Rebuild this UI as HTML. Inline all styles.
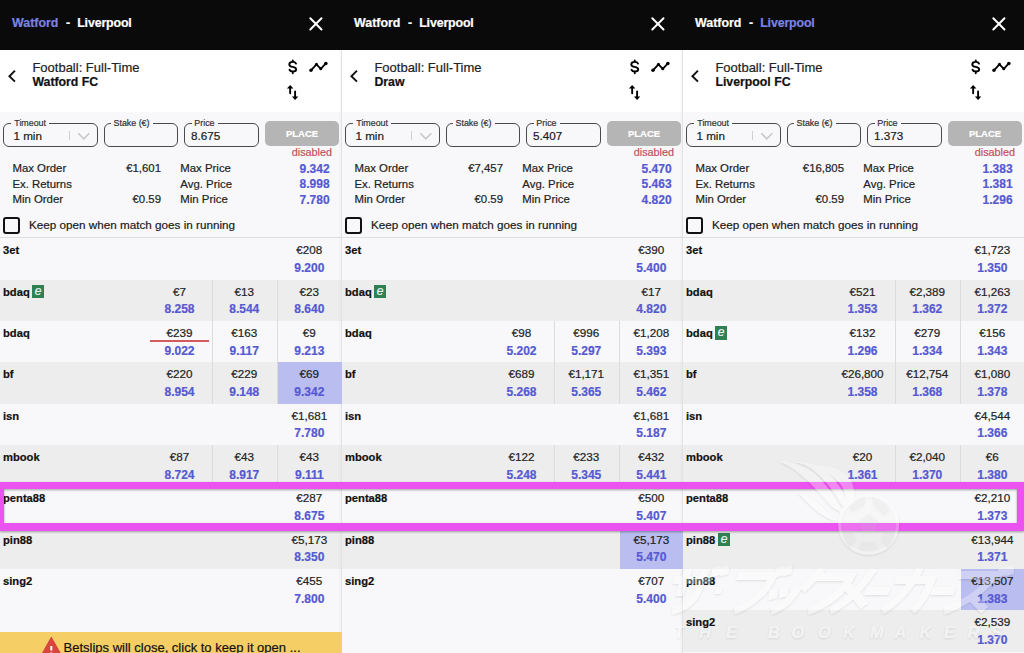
<!DOCTYPE html>
<html><head><meta charset="utf-8"><style>
html,body{margin:0;padding:0;width:1024px;height:653px;overflow:hidden;background:#f8f8fa}
body{position:relative;font-family:"Liberation Sans", sans-serif}
.p{position:absolute;top:0;height:653px;overflow:hidden}
.t{position:absolute;white-space:nowrap;-webkit-text-stroke:0.2px currentColor}
.r{position:absolute}
</style></head><body>
<div class="p" style="left:0px;width:342px"><div class="r" style="left:0.00px;top:0.00px;width:342.00px;height:50.00px;background:#0a0a0a"></div><div class="r" style="left:0.00px;top:50.00px;width:342.00px;height:62.00px;background:#ffffff"></div><div class="r" style="left:0.00px;top:112.00px;width:342.00px;height:541.00px;background:#f8f8fa"></div><div class="t" style="top:17.10px;font-size:12.4px;line-height:12.4px;font-weight:bold;color:#7b83e4;left:12.00px;">Watford</div><div class="t" style="top:17.10px;font-size:12.4px;line-height:12.4px;font-weight:bold;color:#ffffff;left:66.00px;">-</div><div class="t" style="top:17.10px;font-size:12.4px;line-height:12.4px;font-weight:bold;color:#ffffff;letter-spacing:-0.15px;left:77.20px;">Liverpool</div><svg class="r" style="left:305.5px;top:13.7px" width="20" height="20" viewBox="0 0 20 20"><path d="M4.3 4.3L15.5 15.5M15.5 4.3L4.3 15.5" stroke="#fff" stroke-width="2" stroke-linecap="round"/></svg><svg class="r" style="left:6px;top:67.5px" width="12" height="16" viewBox="0 0 12 16"><path d="M8.3 3.4L3.4 8.2L8.3 13" stroke="#111" stroke-width="1.9" fill="none" stroke-linecap="square"/></svg><div class="t" style="top:60.70px;font-size:13px;line-height:13px;font-weight:normal;color:#222;left:32.40px;">Football: Full-Time</div><div class="t" style="top:75.89px;font-size:12.3px;line-height:12.3px;font-weight:bold;color:#111;left:32.40px;">Watford FC</div><svg class="r" style="left:283px;top:55px" width="20" height="25" viewBox="0 0 20 25"><path d="M13 8.6C12.5 7.5 11.3 6.9 9.77 6.9C7.8 6.9 6.3 7.9 6.3 9.4C6.3 11 7.8 11.5 9.77 11.9C11.8 12.3 13.2 13 13.2 14.4C13.2 15.8 11.8 16.5 9.77 16.5C8.2 16.5 7 15.8 6.5 14.75M9.77 5.4V6.9M9.77 16.5V18.3" stroke="#000" stroke-width="1.9" fill="none" stroke-linecap="round"/></svg><svg class="r" style="left:305px;top:57px" width="26" height="20" viewBox="0 0 26 20"><path d="M5.97 13.32L11.49 7.35L15.77 11.79L20.83 6.43" stroke="#000" stroke-width="1.8" fill="none" stroke-linejoin="round"/><circle cx="5.97" cy="13.32" r="1.7"/><circle cx="11.49" cy="7.35" r="1.5"/><circle cx="15.77" cy="11.79" r="1.5"/><circle cx="20.83" cy="6.43" r="1.8"/></svg><svg class="r" style="left:282px;top:80px" width="20" height="24" viewBox="0 0 20 24"><path d="M8.16 7.6V13.3M13.1 11.5V17" stroke="#000" stroke-width="1.9" fill="none" stroke-linecap="round"/><path d="M8.16 4.9L4.9 8.6H11.4Z M13.1 20L9.9 16.4H16.3Z" fill="#000"/></svg><div class="r" style="left:3.40px;top:123.00px;width:94.20px;height:23.50px;border:1px solid #4a4a4a;border-radius:6px;box-sizing:border-box"></div><div class="r" style="left:10.70px;top:120.00px;width:38.60px;height:6.00px;background:#f8f8fa"></div><div class="t" style="top:118.97px;font-size:8.9px;line-height:8.9px;font-weight:normal;color:#333;left:14.30px;">Timeout</div><div class="t" style="top:129.60px;font-size:11.7px;line-height:11.7px;font-weight:normal;color:#1a1a1a;left:13.40px;">1 min</div><div class="r" style="left:69.00px;top:131.00px;width:1.00px;height:8.60px;background:#d0d0d0"></div><svg class="r" style="left:77px;top:132px" width="14" height="9" viewBox="0 0 14 9"><path d="M1.3 1.3L6.8 6.8L12.3 1.3" stroke="#c8c8c8" stroke-width="1.6" fill="none"/></svg><div class="r" style="left:103.60px;top:123.00px;width:74.90px;height:23.50px;border:1px solid #4a4a4a;border-radius:6px;box-sizing:border-box"></div><div class="r" style="left:110.50px;top:120.00px;width:42.00px;height:6.00px;background:#f8f8fa"></div><div class="t" style="top:118.97px;font-size:8.9px;line-height:8.9px;font-weight:normal;color:#333;left:113.50px;">Stake (€)</div><div class="r" style="left:184.20px;top:123.00px;width:74.80px;height:23.50px;border:1px solid #4a4a4a;border-radius:6px;box-sizing:border-box"></div><div class="r" style="left:192.00px;top:120.00px;width:26.00px;height:6.00px;background:#f8f8fa"></div><div class="t" style="top:118.97px;font-size:8.9px;line-height:8.9px;font-weight:normal;color:#333;left:194.30px;">Price</div><div class="t" style="top:129.60px;font-size:11.7px;line-height:11.7px;font-weight:normal;color:#1a1a1a;left:191.00px;">8.675</div><div class="r" style="left:265.00px;top:121.20px;width:74.00px;height:24.60px;background:#b5b5b5;border-radius:5px"></div><div class="t" style="top:128.96px;font-size:9.5px;line-height:9.5px;font-weight:bold;color:#ffffff;left:102.00px;width:400px;text-align:center;">PLACE</div><div class="t" style="top:147.16px;font-size:10.8px;line-height:10.8px;font-weight:normal;color:#c34f5c;left:-68.00px;width:400px;text-align:right;">disabled</div><div class="t" style="top:162.95px;font-size:11.4px;line-height:11.4px;font-weight:normal;color:#222;left:12.40px;">Max Order</div><div class="t" style="top:162.95px;font-size:11.4px;line-height:11.4px;font-weight:normal;color:#222;left:-239.00px;width:400px;text-align:right;">€1,601</div><div class="t" style="top:178.60px;font-size:11.4px;line-height:11.4px;font-weight:normal;color:#222;left:12.40px;">Ex. Returns</div><div class="t" style="top:194.25px;font-size:11.4px;line-height:11.4px;font-weight:normal;color:#222;left:12.40px;">Min Order</div><div class="t" style="top:194.25px;font-size:11.4px;line-height:11.4px;font-weight:normal;color:#222;left:-239.00px;width:400px;text-align:right;">€0.59</div><div class="t" style="top:162.95px;font-size:11.4px;line-height:11.4px;font-weight:normal;color:#222;left:180.30px;">Max Price</div><div class="t" style="top:162.74px;font-size:12px;line-height:12px;font-weight:bold;color:#5659d2;left:-70.40px;width:400px;text-align:right;">9.342</div><div class="t" style="top:178.60px;font-size:11.4px;line-height:11.4px;font-weight:normal;color:#222;left:180.30px;">Avg. Price</div><div class="t" style="top:178.39px;font-size:12px;line-height:12px;font-weight:bold;color:#5659d2;left:-70.40px;width:400px;text-align:right;">8.998</div><div class="t" style="top:194.25px;font-size:11.4px;line-height:11.4px;font-weight:normal;color:#222;left:180.30px;">Min Price</div><div class="t" style="top:194.04px;font-size:12px;line-height:12px;font-weight:bold;color:#5659d2;left:-70.40px;width:400px;text-align:right;">7.780</div><div class="r" style="left:2.90px;top:216.70px;width:17.30px;height:17.00px;border:2px solid #111;border-radius:3px;box-sizing:border-box"></div><div class="t" style="top:219.40px;font-size:11.7px;line-height:11.7px;font-weight:normal;color:#1a1a1a;left:29.00px;">Keep open when match goes in running</div><div class="r" style="left:0.00px;top:237.00px;width:342.00px;height:1.30px;background:#dedede"></div><div class="r" style="left:0.00px;top:238.50px;width:342.00px;height:41.33px;background:#f8f8fa"></div><div class="t" style="top:245.22px;font-size:11.2px;line-height:11.2px;font-weight:bold;color:#111;left:3.00px;">3et</div><div class="t" style="top:244.20px;font-size:11.7px;line-height:11.7px;font-weight:normal;color:#222;left:109.38px;width:400px;text-align:center;">€208</div><div class="t" style="top:262.14px;font-size:12px;line-height:12px;font-weight:bold;color:#5659d2;left:109.38px;width:400px;text-align:center;">9.200</div><div class="r" style="left:0.00px;top:279.83px;width:342.00px;height:41.33px;background:#ededed"></div><div class="r" style="left:212.00px;top:279.83px;width:1.00px;height:41.33px;background:#dcdcdc"></div><div class="r" style="left:277.00px;top:279.83px;width:1.00px;height:41.33px;background:#dcdcdc"></div><div class="t" style="top:286.55px;font-size:11.2px;line-height:11.2px;font-weight:bold;color:#111;left:3.00px;">bdaq</div><div class="r" style="left:32.20px;top:284.83px;width:12.00px;height:13.50px;background:#2f8053"></div><div class="t" style="top:285.07px;font-size:12px;line-height:12px;font-weight:normal;color:#eaf3ec;left:-161.80px;width:400px;text-align:center;font-style:italic;font-family:"Liberation Serif",serif;">e</div><div class="t" style="top:285.53px;font-size:11.7px;line-height:11.7px;font-weight:normal;color:#222;left:-20.50px;width:400px;text-align:center;">€7</div><div class="t" style="top:303.47px;font-size:12px;line-height:12px;font-weight:bold;color:#5659d2;left:-20.50px;width:400px;text-align:center;">8.258</div><div class="t" style="top:285.53px;font-size:11.7px;line-height:11.7px;font-weight:normal;color:#222;left:44.25px;width:400px;text-align:center;">€13</div><div class="t" style="top:303.47px;font-size:12px;line-height:12px;font-weight:bold;color:#5659d2;left:44.25px;width:400px;text-align:center;">8.544</div><div class="t" style="top:285.53px;font-size:11.7px;line-height:11.7px;font-weight:normal;color:#222;left:109.38px;width:400px;text-align:center;">€23</div><div class="t" style="top:303.47px;font-size:12px;line-height:12px;font-weight:bold;color:#5659d2;left:109.38px;width:400px;text-align:center;">8.640</div><div class="r" style="left:0.00px;top:321.16px;width:342.00px;height:41.33px;background:#f8f8fa"></div><div class="r" style="left:212.00px;top:321.16px;width:1.00px;height:41.33px;background:#dcdcdc"></div><div class="r" style="left:277.00px;top:321.16px;width:1.00px;height:41.33px;background:#dcdcdc"></div><div class="t" style="top:327.88px;font-size:11.2px;line-height:11.2px;font-weight:bold;color:#111;left:3.00px;">bdaq</div><div class="t" style="top:326.86px;font-size:11.7px;line-height:11.7px;font-weight:normal;color:#222;left:-20.50px;width:400px;text-align:center;">€239</div><div class="t" style="top:344.80px;font-size:12px;line-height:12px;font-weight:bold;color:#5659d2;left:-20.50px;width:400px;text-align:center;">9.022</div><div class="t" style="top:326.86px;font-size:11.7px;line-height:11.7px;font-weight:normal;color:#222;left:44.25px;width:400px;text-align:center;">€163</div><div class="t" style="top:344.80px;font-size:12px;line-height:12px;font-weight:bold;color:#5659d2;left:44.25px;width:400px;text-align:center;">9.117</div><div class="t" style="top:326.86px;font-size:11.7px;line-height:11.7px;font-weight:normal;color:#222;left:109.38px;width:400px;text-align:center;">€9</div><div class="t" style="top:344.80px;font-size:12px;line-height:12px;font-weight:bold;color:#5659d2;left:109.38px;width:400px;text-align:center;">9.213</div><div class="r" style="left:149.60px;top:340.46px;width:59.40px;height:2.00px;background:#d45a5d"></div><div class="r" style="left:0.00px;top:362.49px;width:342.00px;height:41.33px;background:#ededed"></div><div class="r" style="left:212.00px;top:362.49px;width:1.00px;height:41.33px;background:#dcdcdc"></div><div class="r" style="left:277.00px;top:362.49px;width:1.00px;height:41.33px;background:#dcdcdc"></div><div class="t" style="top:369.21px;font-size:11.2px;line-height:11.2px;font-weight:bold;color:#111;left:3.00px;">bf</div><div class="t" style="top:368.19px;font-size:11.7px;line-height:11.7px;font-weight:normal;color:#222;left:-20.50px;width:400px;text-align:center;">€220</div><div class="t" style="top:386.13px;font-size:12px;line-height:12px;font-weight:bold;color:#5659d2;left:-20.50px;width:400px;text-align:center;">8.954</div><div class="t" style="top:368.19px;font-size:11.7px;line-height:11.7px;font-weight:normal;color:#222;left:44.25px;width:400px;text-align:center;">€229</div><div class="t" style="top:386.13px;font-size:12px;line-height:12px;font-weight:bold;color:#5659d2;left:44.25px;width:400px;text-align:center;">9.148</div><div class="r" style="left:0.00px;top:403.82px;width:342.00px;height:41.33px;background:#f8f8fa"></div><div class="t" style="top:410.54px;font-size:11.2px;line-height:11.2px;font-weight:bold;color:#111;left:3.00px;">isn</div><div class="t" style="top:409.52px;font-size:11.7px;line-height:11.7px;font-weight:normal;color:#222;left:109.38px;width:400px;text-align:center;">€1,681</div><div class="t" style="top:427.46px;font-size:12px;line-height:12px;font-weight:bold;color:#5659d2;left:109.38px;width:400px;text-align:center;">7.780</div><div class="r" style="left:0.00px;top:445.15px;width:342.00px;height:41.33px;background:#ededed"></div><div class="r" style="left:212.00px;top:445.15px;width:1.00px;height:41.33px;background:#dcdcdc"></div><div class="r" style="left:277.00px;top:445.15px;width:1.00px;height:41.33px;background:#dcdcdc"></div><div class="t" style="top:451.87px;font-size:11.2px;line-height:11.2px;font-weight:bold;color:#111;left:3.00px;">mbook</div><div class="t" style="top:450.85px;font-size:11.7px;line-height:11.7px;font-weight:normal;color:#222;left:-20.50px;width:400px;text-align:center;">€87</div><div class="t" style="top:468.79px;font-size:12px;line-height:12px;font-weight:bold;color:#5659d2;left:-20.50px;width:400px;text-align:center;">8.724</div><div class="t" style="top:450.85px;font-size:11.7px;line-height:11.7px;font-weight:normal;color:#222;left:44.25px;width:400px;text-align:center;">€43</div><div class="t" style="top:468.79px;font-size:12px;line-height:12px;font-weight:bold;color:#5659d2;left:44.25px;width:400px;text-align:center;">8.917</div><div class="t" style="top:450.85px;font-size:11.7px;line-height:11.7px;font-weight:normal;color:#222;left:109.38px;width:400px;text-align:center;">€43</div><div class="t" style="top:468.79px;font-size:12px;line-height:12px;font-weight:bold;color:#5659d2;left:109.38px;width:400px;text-align:center;">9.111</div><div class="r" style="left:0.00px;top:486.48px;width:342.00px;height:41.33px;background:#f8f8fa"></div><div class="t" style="top:493.20px;font-size:11.2px;line-height:11.2px;font-weight:bold;color:#111;left:3.00px;">penta88</div><div class="t" style="top:492.18px;font-size:11.7px;line-height:11.7px;font-weight:normal;color:#222;left:109.38px;width:400px;text-align:center;">€287</div><div class="t" style="top:510.12px;font-size:12px;line-height:12px;font-weight:bold;color:#5659d2;left:109.38px;width:400px;text-align:center;">8.675</div><div class="r" style="left:0.00px;top:527.81px;width:342.00px;height:41.33px;background:#ededed"></div><div class="t" style="top:534.53px;font-size:11.2px;line-height:11.2px;font-weight:bold;color:#111;left:3.00px;">pin88</div><div class="t" style="top:533.51px;font-size:11.7px;line-height:11.7px;font-weight:normal;color:#222;left:109.38px;width:400px;text-align:center;">€5,173</div><div class="t" style="top:551.45px;font-size:12px;line-height:12px;font-weight:bold;color:#5659d2;left:109.38px;width:400px;text-align:center;">8.350</div><div class="r" style="left:0.00px;top:569.14px;width:342.00px;height:41.33px;background:#f8f8fa"></div><div class="t" style="top:575.86px;font-size:11.2px;line-height:11.2px;font-weight:bold;color:#111;left:3.00px;">sing2</div><div class="t" style="top:574.84px;font-size:11.7px;line-height:11.7px;font-weight:normal;color:#222;left:109.38px;width:400px;text-align:center;">€455</div><div class="t" style="top:592.78px;font-size:12px;line-height:12px;font-weight:bold;color:#5659d2;left:109.38px;width:400px;text-align:center;">7.800</div><div class="r" style="left:338.00px;top:50.00px;width:3.00px;height:603.00px;background:linear-gradient(to right, rgba(0,0,0,0), rgba(0,0,0,0.025))"></div><div class="r" style="left:341.00px;top:50.00px;width:1.00px;height:603.00px;background:#e2e2e2"></div><div class="r" style="left:277.50px;top:362.49px;width:64.50px;height:41.33px;background:#b9bdf0"></div><div class="t" style="top:368.19px;font-size:11.7px;line-height:11.7px;font-weight:normal;color:#222;left:109.38px;width:400px;text-align:center;">€69</div><div class="t" style="top:386.13px;font-size:12px;line-height:12px;font-weight:bold;color:#5659d2;left:109.38px;width:400px;text-align:center;">9.342</div><div class="r" style="left:0.00px;top:632.00px;width:342.00px;height:21.00px;background:#f5cf66"></div><svg class="r" style="left:40px;top:636px" width="24" height="20" viewBox="0 0 24 20"><path d="M11.3 1.6L21.5 19.5H1.3Z" fill="#d9453f" stroke="#d9453f" stroke-width="1.2" stroke-linejoin="round"/><rect x="10.3" y="10" width="2" height="4.5" fill="#fff"/><rect x="10.3" y="16.5" width="2" height="2" fill="#fff"/></svg><div class="t" style="top:640.50px;font-size:13px;line-height:13px;font-weight:normal;color:#111;left:63.50px;">Betslips will close, click to keep it open ...</div></div><div class="p" style="left:342px;width:341px"><div class="r" style="left:0.00px;top:0.00px;width:341.00px;height:50.00px;background:#0a0a0a"></div><div class="r" style="left:0.00px;top:50.00px;width:341.00px;height:62.00px;background:#ffffff"></div><div class="r" style="left:0.00px;top:112.00px;width:341.00px;height:541.00px;background:#f8f8fa"></div><div class="t" style="top:17.10px;font-size:12.4px;line-height:12.4px;font-weight:bold;color:#ffffff;left:12.00px;">Watford</div><div class="t" style="top:17.10px;font-size:12.4px;line-height:12.4px;font-weight:bold;color:#ffffff;left:66.00px;">-</div><div class="t" style="top:17.10px;font-size:12.4px;line-height:12.4px;font-weight:bold;color:#ffffff;letter-spacing:-0.15px;left:77.20px;">Liverpool</div><svg class="r" style="left:305.5px;top:13.7px" width="20" height="20" viewBox="0 0 20 20"><path d="M4.3 4.3L15.5 15.5M15.5 4.3L4.3 15.5" stroke="#fff" stroke-width="2" stroke-linecap="round"/></svg><svg class="r" style="left:6px;top:67.5px" width="12" height="16" viewBox="0 0 12 16"><path d="M8.3 3.4L3.4 8.2L8.3 13" stroke="#111" stroke-width="1.9" fill="none" stroke-linecap="square"/></svg><div class="t" style="top:60.70px;font-size:13px;line-height:13px;font-weight:normal;color:#222;left:32.40px;">Football: Full-Time</div><div class="t" style="top:75.89px;font-size:12.3px;line-height:12.3px;font-weight:bold;color:#111;left:32.40px;">Draw</div><svg class="r" style="left:283px;top:55px" width="20" height="25" viewBox="0 0 20 25"><path d="M13 8.6C12.5 7.5 11.3 6.9 9.77 6.9C7.8 6.9 6.3 7.9 6.3 9.4C6.3 11 7.8 11.5 9.77 11.9C11.8 12.3 13.2 13 13.2 14.4C13.2 15.8 11.8 16.5 9.77 16.5C8.2 16.5 7 15.8 6.5 14.75M9.77 5.4V6.9M9.77 16.5V18.3" stroke="#000" stroke-width="1.9" fill="none" stroke-linecap="round"/></svg><svg class="r" style="left:305px;top:57px" width="26" height="20" viewBox="0 0 26 20"><path d="M5.97 13.32L11.49 7.35L15.77 11.79L20.83 6.43" stroke="#000" stroke-width="1.8" fill="none" stroke-linejoin="round"/><circle cx="5.97" cy="13.32" r="1.7"/><circle cx="11.49" cy="7.35" r="1.5"/><circle cx="15.77" cy="11.79" r="1.5"/><circle cx="20.83" cy="6.43" r="1.8"/></svg><svg class="r" style="left:282px;top:80px" width="20" height="24" viewBox="0 0 20 24"><path d="M8.16 7.6V13.3M13.1 11.5V17" stroke="#000" stroke-width="1.9" fill="none" stroke-linecap="round"/><path d="M8.16 4.9L4.9 8.6H11.4Z M13.1 20L9.9 16.4H16.3Z" fill="#000"/></svg><div class="r" style="left:3.40px;top:123.00px;width:94.20px;height:23.50px;border:1px solid #4a4a4a;border-radius:6px;box-sizing:border-box"></div><div class="r" style="left:10.70px;top:120.00px;width:38.60px;height:6.00px;background:#f8f8fa"></div><div class="t" style="top:118.97px;font-size:8.9px;line-height:8.9px;font-weight:normal;color:#333;left:14.30px;">Timeout</div><div class="t" style="top:129.60px;font-size:11.7px;line-height:11.7px;font-weight:normal;color:#1a1a1a;left:13.40px;">1 min</div><div class="r" style="left:69.00px;top:131.00px;width:1.00px;height:8.60px;background:#d0d0d0"></div><svg class="r" style="left:77px;top:132px" width="14" height="9" viewBox="0 0 14 9"><path d="M1.3 1.3L6.8 6.8L12.3 1.3" stroke="#c8c8c8" stroke-width="1.6" fill="none"/></svg><div class="r" style="left:103.60px;top:123.00px;width:74.90px;height:23.50px;border:1px solid #4a4a4a;border-radius:6px;box-sizing:border-box"></div><div class="r" style="left:110.50px;top:120.00px;width:42.00px;height:6.00px;background:#f8f8fa"></div><div class="t" style="top:118.97px;font-size:8.9px;line-height:8.9px;font-weight:normal;color:#333;left:113.50px;">Stake (€)</div><div class="r" style="left:184.20px;top:123.00px;width:74.80px;height:23.50px;border:1px solid #4a4a4a;border-radius:6px;box-sizing:border-box"></div><div class="r" style="left:192.00px;top:120.00px;width:26.00px;height:6.00px;background:#f8f8fa"></div><div class="t" style="top:118.97px;font-size:8.9px;line-height:8.9px;font-weight:normal;color:#333;left:194.30px;">Price</div><div class="t" style="top:129.60px;font-size:11.7px;line-height:11.7px;font-weight:normal;color:#1a1a1a;left:191.00px;">5.407</div><div class="r" style="left:265.00px;top:121.20px;width:74.00px;height:24.60px;background:#b5b5b5;border-radius:5px"></div><div class="t" style="top:128.96px;font-size:9.5px;line-height:9.5px;font-weight:bold;color:#ffffff;left:102.00px;width:400px;text-align:center;">PLACE</div><div class="t" style="top:147.16px;font-size:10.8px;line-height:10.8px;font-weight:normal;color:#c34f5c;left:-68.00px;width:400px;text-align:right;">disabled</div><div class="t" style="top:162.95px;font-size:11.4px;line-height:11.4px;font-weight:normal;color:#222;left:12.40px;">Max Order</div><div class="t" style="top:162.95px;font-size:11.4px;line-height:11.4px;font-weight:normal;color:#222;left:-239.00px;width:400px;text-align:right;">€7,457</div><div class="t" style="top:178.60px;font-size:11.4px;line-height:11.4px;font-weight:normal;color:#222;left:12.40px;">Ex. Returns</div><div class="t" style="top:194.25px;font-size:11.4px;line-height:11.4px;font-weight:normal;color:#222;left:12.40px;">Min Order</div><div class="t" style="top:194.25px;font-size:11.4px;line-height:11.4px;font-weight:normal;color:#222;left:-239.00px;width:400px;text-align:right;">€0.59</div><div class="t" style="top:162.95px;font-size:11.4px;line-height:11.4px;font-weight:normal;color:#222;left:180.30px;">Max Price</div><div class="t" style="top:162.74px;font-size:12px;line-height:12px;font-weight:bold;color:#5659d2;left:-70.40px;width:400px;text-align:right;">5.470</div><div class="t" style="top:178.60px;font-size:11.4px;line-height:11.4px;font-weight:normal;color:#222;left:180.30px;">Avg. Price</div><div class="t" style="top:178.39px;font-size:12px;line-height:12px;font-weight:bold;color:#5659d2;left:-70.40px;width:400px;text-align:right;">5.463</div><div class="t" style="top:194.25px;font-size:11.4px;line-height:11.4px;font-weight:normal;color:#222;left:180.30px;">Min Price</div><div class="t" style="top:194.04px;font-size:12px;line-height:12px;font-weight:bold;color:#5659d2;left:-70.40px;width:400px;text-align:right;">4.820</div><div class="r" style="left:2.90px;top:216.70px;width:17.30px;height:17.00px;border:2px solid #111;border-radius:3px;box-sizing:border-box"></div><div class="t" style="top:219.40px;font-size:11.7px;line-height:11.7px;font-weight:normal;color:#1a1a1a;left:29.00px;">Keep open when match goes in running</div><div class="r" style="left:0.00px;top:237.00px;width:341.00px;height:1.30px;background:#dedede"></div><div class="r" style="left:0.00px;top:238.50px;width:341.00px;height:41.33px;background:#f8f8fa"></div><div class="t" style="top:245.22px;font-size:11.2px;line-height:11.2px;font-weight:bold;color:#111;left:3.00px;">3et</div><div class="t" style="top:244.20px;font-size:11.7px;line-height:11.7px;font-weight:normal;color:#222;left:109.38px;width:400px;text-align:center;">€390</div><div class="t" style="top:262.14px;font-size:12px;line-height:12px;font-weight:bold;color:#5659d2;left:109.38px;width:400px;text-align:center;">5.400</div><div class="r" style="left:0.00px;top:279.83px;width:341.00px;height:41.33px;background:#ededed"></div><div class="t" style="top:286.55px;font-size:11.2px;line-height:11.2px;font-weight:bold;color:#111;left:3.00px;">bdaq</div><div class="r" style="left:32.20px;top:284.83px;width:12.00px;height:13.50px;background:#2f8053"></div><div class="t" style="top:285.07px;font-size:12px;line-height:12px;font-weight:normal;color:#eaf3ec;left:-161.80px;width:400px;text-align:center;font-style:italic;font-family:"Liberation Serif",serif;">e</div><div class="t" style="top:285.53px;font-size:11.7px;line-height:11.7px;font-weight:normal;color:#222;left:109.38px;width:400px;text-align:center;">€17</div><div class="t" style="top:303.47px;font-size:12px;line-height:12px;font-weight:bold;color:#5659d2;left:109.38px;width:400px;text-align:center;">4.820</div><div class="r" style="left:0.00px;top:321.16px;width:341.00px;height:41.33px;background:#f8f8fa"></div><div class="r" style="left:212.00px;top:321.16px;width:1.00px;height:41.33px;background:#dcdcdc"></div><div class="r" style="left:277.00px;top:321.16px;width:1.00px;height:41.33px;background:#dcdcdc"></div><div class="t" style="top:327.88px;font-size:11.2px;line-height:11.2px;font-weight:bold;color:#111;left:3.00px;">bdaq</div><div class="t" style="top:326.86px;font-size:11.7px;line-height:11.7px;font-weight:normal;color:#222;left:-20.50px;width:400px;text-align:center;">€98</div><div class="t" style="top:344.80px;font-size:12px;line-height:12px;font-weight:bold;color:#5659d2;left:-20.50px;width:400px;text-align:center;">5.202</div><div class="t" style="top:326.86px;font-size:11.7px;line-height:11.7px;font-weight:normal;color:#222;left:44.25px;width:400px;text-align:center;">€996</div><div class="t" style="top:344.80px;font-size:12px;line-height:12px;font-weight:bold;color:#5659d2;left:44.25px;width:400px;text-align:center;">5.297</div><div class="t" style="top:326.86px;font-size:11.7px;line-height:11.7px;font-weight:normal;color:#222;left:109.38px;width:400px;text-align:center;">€1,208</div><div class="t" style="top:344.80px;font-size:12px;line-height:12px;font-weight:bold;color:#5659d2;left:109.38px;width:400px;text-align:center;">5.393</div><div class="r" style="left:0.00px;top:362.49px;width:341.00px;height:41.33px;background:#ededed"></div><div class="r" style="left:212.00px;top:362.49px;width:1.00px;height:41.33px;background:#dcdcdc"></div><div class="r" style="left:277.00px;top:362.49px;width:1.00px;height:41.33px;background:#dcdcdc"></div><div class="t" style="top:369.21px;font-size:11.2px;line-height:11.2px;font-weight:bold;color:#111;left:3.00px;">bf</div><div class="t" style="top:368.19px;font-size:11.7px;line-height:11.7px;font-weight:normal;color:#222;left:-20.50px;width:400px;text-align:center;">€689</div><div class="t" style="top:386.13px;font-size:12px;line-height:12px;font-weight:bold;color:#5659d2;left:-20.50px;width:400px;text-align:center;">5.268</div><div class="t" style="top:368.19px;font-size:11.7px;line-height:11.7px;font-weight:normal;color:#222;left:44.25px;width:400px;text-align:center;">€1,171</div><div class="t" style="top:386.13px;font-size:12px;line-height:12px;font-weight:bold;color:#5659d2;left:44.25px;width:400px;text-align:center;">5.365</div><div class="t" style="top:368.19px;font-size:11.7px;line-height:11.7px;font-weight:normal;color:#222;left:109.38px;width:400px;text-align:center;">€1,351</div><div class="t" style="top:386.13px;font-size:12px;line-height:12px;font-weight:bold;color:#5659d2;left:109.38px;width:400px;text-align:center;">5.462</div><div class="r" style="left:0.00px;top:403.82px;width:341.00px;height:41.33px;background:#f8f8fa"></div><div class="t" style="top:410.54px;font-size:11.2px;line-height:11.2px;font-weight:bold;color:#111;left:3.00px;">isn</div><div class="t" style="top:409.52px;font-size:11.7px;line-height:11.7px;font-weight:normal;color:#222;left:109.38px;width:400px;text-align:center;">€1,681</div><div class="t" style="top:427.46px;font-size:12px;line-height:12px;font-weight:bold;color:#5659d2;left:109.38px;width:400px;text-align:center;">5.187</div><div class="r" style="left:0.00px;top:445.15px;width:341.00px;height:41.33px;background:#ededed"></div><div class="r" style="left:212.00px;top:445.15px;width:1.00px;height:41.33px;background:#dcdcdc"></div><div class="r" style="left:277.00px;top:445.15px;width:1.00px;height:41.33px;background:#dcdcdc"></div><div class="t" style="top:451.87px;font-size:11.2px;line-height:11.2px;font-weight:bold;color:#111;left:3.00px;">mbook</div><div class="t" style="top:450.85px;font-size:11.7px;line-height:11.7px;font-weight:normal;color:#222;left:-20.50px;width:400px;text-align:center;">€122</div><div class="t" style="top:468.79px;font-size:12px;line-height:12px;font-weight:bold;color:#5659d2;left:-20.50px;width:400px;text-align:center;">5.248</div><div class="t" style="top:450.85px;font-size:11.7px;line-height:11.7px;font-weight:normal;color:#222;left:44.25px;width:400px;text-align:center;">€233</div><div class="t" style="top:468.79px;font-size:12px;line-height:12px;font-weight:bold;color:#5659d2;left:44.25px;width:400px;text-align:center;">5.345</div><div class="t" style="top:450.85px;font-size:11.7px;line-height:11.7px;font-weight:normal;color:#222;left:109.38px;width:400px;text-align:center;">€432</div><div class="t" style="top:468.79px;font-size:12px;line-height:12px;font-weight:bold;color:#5659d2;left:109.38px;width:400px;text-align:center;">5.441</div><div class="r" style="left:0.00px;top:486.48px;width:341.00px;height:41.33px;background:#f8f8fa"></div><div class="t" style="top:493.20px;font-size:11.2px;line-height:11.2px;font-weight:bold;color:#111;left:3.00px;">penta88</div><div class="t" style="top:492.18px;font-size:11.7px;line-height:11.7px;font-weight:normal;color:#222;left:109.38px;width:400px;text-align:center;">€500</div><div class="t" style="top:510.12px;font-size:12px;line-height:12px;font-weight:bold;color:#5659d2;left:109.38px;width:400px;text-align:center;">5.407</div><div class="r" style="left:0.00px;top:527.81px;width:341.00px;height:41.33px;background:#ededed"></div><div class="t" style="top:534.53px;font-size:11.2px;line-height:11.2px;font-weight:bold;color:#111;left:3.00px;">pin88</div><div class="r" style="left:0.00px;top:569.14px;width:341.00px;height:41.33px;background:#f8f8fa"></div><div class="t" style="top:575.86px;font-size:11.2px;line-height:11.2px;font-weight:bold;color:#111;left:3.00px;">sing2</div><div class="t" style="top:574.84px;font-size:11.7px;line-height:11.7px;font-weight:normal;color:#222;left:109.38px;width:400px;text-align:center;">€707</div><div class="t" style="top:592.78px;font-size:12px;line-height:12px;font-weight:bold;color:#5659d2;left:109.38px;width:400px;text-align:center;">5.400</div><div class="r" style="left:337.00px;top:50.00px;width:3.00px;height:603.00px;background:linear-gradient(to right, rgba(0,0,0,0), rgba(0,0,0,0.025))"></div><div class="r" style="left:340.00px;top:50.00px;width:1.00px;height:603.00px;background:#e2e2e2"></div><div class="r" style="left:277.50px;top:527.81px;width:63.50px;height:41.33px;background:#b9bdf0"></div><div class="t" style="top:533.51px;font-size:11.7px;line-height:11.7px;font-weight:normal;color:#222;left:109.38px;width:400px;text-align:center;">€5,173</div><div class="t" style="top:551.45px;font-size:12px;line-height:12px;font-weight:bold;color:#5659d2;left:109.38px;width:400px;text-align:center;">5.470</div></div><div class="p" style="left:683px;width:341px"><div class="r" style="left:0.00px;top:0.00px;width:341.00px;height:50.00px;background:#0a0a0a"></div><div class="r" style="left:0.00px;top:50.00px;width:341.00px;height:62.00px;background:#ffffff"></div><div class="r" style="left:0.00px;top:112.00px;width:341.00px;height:541.00px;background:#f8f8fa"></div><div class="t" style="top:17.10px;font-size:12.4px;line-height:12.4px;font-weight:bold;color:#ffffff;left:12.00px;">Watford</div><div class="t" style="top:17.10px;font-size:12.4px;line-height:12.4px;font-weight:bold;color:#ffffff;left:66.00px;">-</div><div class="t" style="top:17.10px;font-size:12.4px;line-height:12.4px;font-weight:bold;color:#7b83e4;letter-spacing:-0.15px;left:77.20px;">Liverpool</div><svg class="r" style="left:305.5px;top:13.7px" width="20" height="20" viewBox="0 0 20 20"><path d="M4.3 4.3L15.5 15.5M15.5 4.3L4.3 15.5" stroke="#fff" stroke-width="2" stroke-linecap="round"/></svg><svg class="r" style="left:6px;top:67.5px" width="12" height="16" viewBox="0 0 12 16"><path d="M8.3 3.4L3.4 8.2L8.3 13" stroke="#111" stroke-width="1.9" fill="none" stroke-linecap="square"/></svg><div class="t" style="top:60.70px;font-size:13px;line-height:13px;font-weight:normal;color:#222;left:32.40px;">Football: Full-Time</div><div class="t" style="top:75.89px;font-size:12.3px;line-height:12.3px;font-weight:bold;color:#111;left:32.40px;">Liverpool FC</div><svg class="r" style="left:283px;top:55px" width="20" height="25" viewBox="0 0 20 25"><path d="M13 8.6C12.5 7.5 11.3 6.9 9.77 6.9C7.8 6.9 6.3 7.9 6.3 9.4C6.3 11 7.8 11.5 9.77 11.9C11.8 12.3 13.2 13 13.2 14.4C13.2 15.8 11.8 16.5 9.77 16.5C8.2 16.5 7 15.8 6.5 14.75M9.77 5.4V6.9M9.77 16.5V18.3" stroke="#000" stroke-width="1.9" fill="none" stroke-linecap="round"/></svg><svg class="r" style="left:305px;top:57px" width="26" height="20" viewBox="0 0 26 20"><path d="M5.97 13.32L11.49 7.35L15.77 11.79L20.83 6.43" stroke="#000" stroke-width="1.8" fill="none" stroke-linejoin="round"/><circle cx="5.97" cy="13.32" r="1.7"/><circle cx="11.49" cy="7.35" r="1.5"/><circle cx="15.77" cy="11.79" r="1.5"/><circle cx="20.83" cy="6.43" r="1.8"/></svg><svg class="r" style="left:282px;top:80px" width="20" height="24" viewBox="0 0 20 24"><path d="M8.16 7.6V13.3M13.1 11.5V17" stroke="#000" stroke-width="1.9" fill="none" stroke-linecap="round"/><path d="M8.16 4.9L4.9 8.6H11.4Z M13.1 20L9.9 16.4H16.3Z" fill="#000"/></svg><div class="r" style="left:3.40px;top:123.00px;width:94.20px;height:23.50px;border:1px solid #4a4a4a;border-radius:6px;box-sizing:border-box"></div><div class="r" style="left:10.70px;top:120.00px;width:38.60px;height:6.00px;background:#f8f8fa"></div><div class="t" style="top:118.97px;font-size:8.9px;line-height:8.9px;font-weight:normal;color:#333;left:14.30px;">Timeout</div><div class="t" style="top:129.60px;font-size:11.7px;line-height:11.7px;font-weight:normal;color:#1a1a1a;left:13.40px;">1 min</div><div class="r" style="left:69.00px;top:131.00px;width:1.00px;height:8.60px;background:#d0d0d0"></div><svg class="r" style="left:77px;top:132px" width="14" height="9" viewBox="0 0 14 9"><path d="M1.3 1.3L6.8 6.8L12.3 1.3" stroke="#c8c8c8" stroke-width="1.6" fill="none"/></svg><div class="r" style="left:103.60px;top:123.00px;width:74.90px;height:23.50px;border:1px solid #4a4a4a;border-radius:6px;box-sizing:border-box"></div><div class="r" style="left:110.50px;top:120.00px;width:42.00px;height:6.00px;background:#f8f8fa"></div><div class="t" style="top:118.97px;font-size:8.9px;line-height:8.9px;font-weight:normal;color:#333;left:113.50px;">Stake (€)</div><div class="r" style="left:184.20px;top:123.00px;width:74.80px;height:23.50px;border:1px solid #4a4a4a;border-radius:6px;box-sizing:border-box"></div><div class="r" style="left:192.00px;top:120.00px;width:26.00px;height:6.00px;background:#f8f8fa"></div><div class="t" style="top:118.97px;font-size:8.9px;line-height:8.9px;font-weight:normal;color:#333;left:194.30px;">Price</div><div class="t" style="top:129.60px;font-size:11.7px;line-height:11.7px;font-weight:normal;color:#1a1a1a;left:191.00px;">1.373</div><div class="r" style="left:265.00px;top:121.20px;width:74.00px;height:24.60px;background:#b5b5b5;border-radius:5px"></div><div class="t" style="top:128.96px;font-size:9.5px;line-height:9.5px;font-weight:bold;color:#ffffff;left:102.00px;width:400px;text-align:center;">PLACE</div><div class="t" style="top:147.16px;font-size:10.8px;line-height:10.8px;font-weight:normal;color:#c34f5c;left:-68.00px;width:400px;text-align:right;">disabled</div><div class="t" style="top:162.95px;font-size:11.4px;line-height:11.4px;font-weight:normal;color:#222;left:12.40px;">Max Order</div><div class="t" style="top:162.95px;font-size:11.4px;line-height:11.4px;font-weight:normal;color:#222;left:-239.00px;width:400px;text-align:right;">€16,805</div><div class="t" style="top:178.60px;font-size:11.4px;line-height:11.4px;font-weight:normal;color:#222;left:12.40px;">Ex. Returns</div><div class="t" style="top:194.25px;font-size:11.4px;line-height:11.4px;font-weight:normal;color:#222;left:12.40px;">Min Order</div><div class="t" style="top:194.25px;font-size:11.4px;line-height:11.4px;font-weight:normal;color:#222;left:-239.00px;width:400px;text-align:right;">€0.59</div><div class="t" style="top:162.95px;font-size:11.4px;line-height:11.4px;font-weight:normal;color:#222;left:180.30px;">Max Price</div><div class="t" style="top:162.74px;font-size:12px;line-height:12px;font-weight:bold;color:#5659d2;left:-70.40px;width:400px;text-align:right;">1.383</div><div class="t" style="top:178.60px;font-size:11.4px;line-height:11.4px;font-weight:normal;color:#222;left:180.30px;">Avg. Price</div><div class="t" style="top:178.39px;font-size:12px;line-height:12px;font-weight:bold;color:#5659d2;left:-70.40px;width:400px;text-align:right;">1.381</div><div class="t" style="top:194.25px;font-size:11.4px;line-height:11.4px;font-weight:normal;color:#222;left:180.30px;">Min Price</div><div class="t" style="top:194.04px;font-size:12px;line-height:12px;font-weight:bold;color:#5659d2;left:-70.40px;width:400px;text-align:right;">1.296</div><div class="r" style="left:2.90px;top:216.70px;width:17.30px;height:17.00px;border:2px solid #111;border-radius:3px;box-sizing:border-box"></div><div class="t" style="top:219.40px;font-size:11.7px;line-height:11.7px;font-weight:normal;color:#1a1a1a;left:29.00px;">Keep open when match goes in running</div><div class="r" style="left:0.00px;top:237.00px;width:341.00px;height:1.30px;background:#dedede"></div><div class="r" style="left:0.00px;top:238.50px;width:341.00px;height:41.33px;background:#f8f8fa"></div><div class="t" style="top:245.22px;font-size:11.2px;line-height:11.2px;font-weight:bold;color:#111;left:3.00px;">3et</div><div class="t" style="top:244.20px;font-size:11.7px;line-height:11.7px;font-weight:normal;color:#222;left:109.38px;width:400px;text-align:center;">€1,723</div><div class="t" style="top:262.14px;font-size:12px;line-height:12px;font-weight:bold;color:#5659d2;left:109.38px;width:400px;text-align:center;">1.350</div><div class="r" style="left:0.00px;top:279.83px;width:341.00px;height:41.33px;background:#ededed"></div><div class="r" style="left:212.00px;top:279.83px;width:1.00px;height:41.33px;background:#dcdcdc"></div><div class="r" style="left:277.00px;top:279.83px;width:1.00px;height:41.33px;background:#dcdcdc"></div><div class="t" style="top:286.55px;font-size:11.2px;line-height:11.2px;font-weight:bold;color:#111;left:3.00px;">bdaq</div><div class="t" style="top:285.53px;font-size:11.7px;line-height:11.7px;font-weight:normal;color:#222;left:-20.50px;width:400px;text-align:center;">€521</div><div class="t" style="top:303.47px;font-size:12px;line-height:12px;font-weight:bold;color:#5659d2;left:-20.50px;width:400px;text-align:center;">1.353</div><div class="t" style="top:285.53px;font-size:11.7px;line-height:11.7px;font-weight:normal;color:#222;left:44.25px;width:400px;text-align:center;">€2,389</div><div class="t" style="top:303.47px;font-size:12px;line-height:12px;font-weight:bold;color:#5659d2;left:44.25px;width:400px;text-align:center;">1.362</div><div class="t" style="top:285.53px;font-size:11.7px;line-height:11.7px;font-weight:normal;color:#222;left:109.38px;width:400px;text-align:center;">€1,263</div><div class="t" style="top:303.47px;font-size:12px;line-height:12px;font-weight:bold;color:#5659d2;left:109.38px;width:400px;text-align:center;">1.372</div><div class="r" style="left:0.00px;top:321.16px;width:341.00px;height:41.33px;background:#f8f8fa"></div><div class="r" style="left:212.00px;top:321.16px;width:1.00px;height:41.33px;background:#dcdcdc"></div><div class="r" style="left:277.00px;top:321.16px;width:1.00px;height:41.33px;background:#dcdcdc"></div><div class="t" style="top:327.88px;font-size:11.2px;line-height:11.2px;font-weight:bold;color:#111;left:3.00px;">bdaq</div><div class="r" style="left:32.20px;top:326.16px;width:12.00px;height:13.50px;background:#2f8053"></div><div class="t" style="top:326.40px;font-size:12px;line-height:12px;font-weight:normal;color:#eaf3ec;left:-161.80px;width:400px;text-align:center;font-style:italic;font-family:"Liberation Serif",serif;">e</div><div class="t" style="top:326.86px;font-size:11.7px;line-height:11.7px;font-weight:normal;color:#222;left:-20.50px;width:400px;text-align:center;">€132</div><div class="t" style="top:344.80px;font-size:12px;line-height:12px;font-weight:bold;color:#5659d2;left:-20.50px;width:400px;text-align:center;">1.296</div><div class="t" style="top:326.86px;font-size:11.7px;line-height:11.7px;font-weight:normal;color:#222;left:44.25px;width:400px;text-align:center;">€279</div><div class="t" style="top:344.80px;font-size:12px;line-height:12px;font-weight:bold;color:#5659d2;left:44.25px;width:400px;text-align:center;">1.334</div><div class="t" style="top:326.86px;font-size:11.7px;line-height:11.7px;font-weight:normal;color:#222;left:109.38px;width:400px;text-align:center;">€156</div><div class="t" style="top:344.80px;font-size:12px;line-height:12px;font-weight:bold;color:#5659d2;left:109.38px;width:400px;text-align:center;">1.343</div><div class="r" style="left:0.00px;top:362.49px;width:341.00px;height:41.33px;background:#ededed"></div><div class="r" style="left:212.00px;top:362.49px;width:1.00px;height:41.33px;background:#dcdcdc"></div><div class="r" style="left:277.00px;top:362.49px;width:1.00px;height:41.33px;background:#dcdcdc"></div><div class="t" style="top:369.21px;font-size:11.2px;line-height:11.2px;font-weight:bold;color:#111;left:3.00px;">bf</div><div class="t" style="top:368.19px;font-size:11.7px;line-height:11.7px;font-weight:normal;color:#222;left:-20.50px;width:400px;text-align:center;">€26,800</div><div class="t" style="top:386.13px;font-size:12px;line-height:12px;font-weight:bold;color:#5659d2;left:-20.50px;width:400px;text-align:center;">1.358</div><div class="t" style="top:368.19px;font-size:11.7px;line-height:11.7px;font-weight:normal;color:#222;left:44.25px;width:400px;text-align:center;">€12,754</div><div class="t" style="top:386.13px;font-size:12px;line-height:12px;font-weight:bold;color:#5659d2;left:44.25px;width:400px;text-align:center;">1.368</div><div class="t" style="top:368.19px;font-size:11.7px;line-height:11.7px;font-weight:normal;color:#222;left:109.38px;width:400px;text-align:center;">€1,080</div><div class="t" style="top:386.13px;font-size:12px;line-height:12px;font-weight:bold;color:#5659d2;left:109.38px;width:400px;text-align:center;">1.378</div><div class="r" style="left:0.00px;top:403.82px;width:341.00px;height:41.33px;background:#f8f8fa"></div><div class="t" style="top:410.54px;font-size:11.2px;line-height:11.2px;font-weight:bold;color:#111;left:3.00px;">isn</div><div class="t" style="top:409.52px;font-size:11.7px;line-height:11.7px;font-weight:normal;color:#222;left:109.38px;width:400px;text-align:center;">€4,544</div><div class="t" style="top:427.46px;font-size:12px;line-height:12px;font-weight:bold;color:#5659d2;left:109.38px;width:400px;text-align:center;">1.366</div><div class="r" style="left:0.00px;top:445.15px;width:341.00px;height:41.33px;background:#ededed"></div><div class="r" style="left:212.00px;top:445.15px;width:1.00px;height:41.33px;background:#dcdcdc"></div><div class="r" style="left:277.00px;top:445.15px;width:1.00px;height:41.33px;background:#dcdcdc"></div><div class="t" style="top:451.87px;font-size:11.2px;line-height:11.2px;font-weight:bold;color:#111;left:3.00px;">mbook</div><div class="t" style="top:450.85px;font-size:11.7px;line-height:11.7px;font-weight:normal;color:#222;left:-20.50px;width:400px;text-align:center;">€20</div><div class="t" style="top:468.79px;font-size:12px;line-height:12px;font-weight:bold;color:#5659d2;left:-20.50px;width:400px;text-align:center;">1.361</div><div class="t" style="top:450.85px;font-size:11.7px;line-height:11.7px;font-weight:normal;color:#222;left:44.25px;width:400px;text-align:center;">€2,040</div><div class="t" style="top:468.79px;font-size:12px;line-height:12px;font-weight:bold;color:#5659d2;left:44.25px;width:400px;text-align:center;">1.370</div><div class="t" style="top:450.85px;font-size:11.7px;line-height:11.7px;font-weight:normal;color:#222;left:109.38px;width:400px;text-align:center;">€6</div><div class="t" style="top:468.79px;font-size:12px;line-height:12px;font-weight:bold;color:#5659d2;left:109.38px;width:400px;text-align:center;">1.380</div><div class="r" style="left:0.00px;top:486.48px;width:341.00px;height:41.33px;background:#f8f8fa"></div><div class="t" style="top:493.20px;font-size:11.2px;line-height:11.2px;font-weight:bold;color:#111;left:3.00px;">penta88</div><div class="t" style="top:492.18px;font-size:11.7px;line-height:11.7px;font-weight:normal;color:#222;left:109.38px;width:400px;text-align:center;">€2,210</div><div class="t" style="top:510.12px;font-size:12px;line-height:12px;font-weight:bold;color:#5659d2;left:109.38px;width:400px;text-align:center;">1.373</div><div class="r" style="left:0.00px;top:527.81px;width:341.00px;height:41.33px;background:#ededed"></div><div class="t" style="top:534.53px;font-size:11.2px;line-height:11.2px;font-weight:bold;color:#111;left:3.00px;">pin88</div><div class="r" style="left:35.20px;top:532.81px;width:12.00px;height:13.50px;background:#2f8053"></div><div class="t" style="top:533.05px;font-size:12px;line-height:12px;font-weight:normal;color:#eaf3ec;left:-158.80px;width:400px;text-align:center;font-style:italic;font-family:"Liberation Serif",serif;">e</div><div class="t" style="top:533.51px;font-size:11.7px;line-height:11.7px;font-weight:normal;color:#222;left:109.38px;width:400px;text-align:center;">€13,944</div><div class="t" style="top:551.45px;font-size:12px;line-height:12px;font-weight:bold;color:#5659d2;left:109.38px;width:400px;text-align:center;">1.371</div><div class="r" style="left:0.00px;top:569.14px;width:341.00px;height:41.33px;background:#f8f8fa"></div><div class="t" style="top:575.86px;font-size:11.2px;line-height:11.2px;font-weight:bold;color:#111;left:3.00px;">pin88</div><div class="r" style="left:0.00px;top:610.47px;width:341.00px;height:41.33px;background:#ededed"></div><div class="t" style="top:617.19px;font-size:11.2px;line-height:11.2px;font-weight:bold;color:#111;left:3.00px;">sing2</div><div class="t" style="top:616.17px;font-size:11.7px;line-height:11.7px;font-weight:normal;color:#222;left:109.38px;width:400px;text-align:center;">€2,539</div><div class="t" style="top:634.11px;font-size:12px;line-height:12px;font-weight:bold;color:#5659d2;left:109.38px;width:400px;text-align:center;">1.370</div><div class="r" style="left:277.50px;top:569.14px;width:63.50px;height:41.33px;background:#b9bdf0"></div><div class="t" style="top:574.84px;font-size:11.7px;line-height:11.7px;font-weight:normal;color:#222;left:109.38px;width:400px;text-align:center;">€13,507</div><div class="t" style="top:592.78px;font-size:12px;line-height:12px;font-weight:bold;color:#5659d2;left:109.38px;width:400px;text-align:center;">1.383</div></div>
<div class="r" style="left:0;top:0;width:1024px;height:653px;filter:drop-shadow(0 1.2px 1.2px rgba(0,0,0,0.35))"><div class="r" style="left:0.00px;top:481.50px;width:1024.00px;height:7.50px;background:#ea53ef"></div><div class="r" style="left:0.00px;top:523.30px;width:1024.00px;height:7.40px;background:#ea53ef"></div><div class="r" style="left:0.00px;top:481.50px;width:4.10px;height:49.20px;background:#ea53ef"></div><div class="r" style="left:1017.00px;top:481.50px;width:7.00px;height:49.20px;background:#ea53ef"></div></div><svg class="r" style="left:0;top:0" width="1024" height="653" viewBox="0 0 1024 653"><defs><filter id="sh" x="-10%" y="-10%" width="120%" height="130%"><feDropShadow dx="0" dy="1" stdDeviation="1.2" flood-color="#000" flood-opacity="0.35"/></filter></defs><g filter="url(#sh)" opacity="0.3"><g transform="translate(0 590) skewX(-20) translate(0 -590)"><path d="M670 580H708 M681 569V596 M698 569V590Q698 606 680 611 M708 567L711 576 M716 566L719 575 M732 576H768Q766 600 742 611 M772 567L775 576 M779 566L782 575 M773 589L776 599 M783 587L786 597 M797 587Q795 604 779 611 M814 568Q810 580 802 590 M810 577H846Q842 600 816 611 M866 569Q858 598 838 611 M842 584Q858 594 870 606 M866 591H890 M892 580H928Q928 602 920 611 M912 568Q909 595 890 611 M932 591H955 M954 575H990Q980 598 952 611 M972 595L992 610 M994 567L997 576 M1001 566L1004 575" stroke="#fff" stroke-width="8" fill="none" stroke-linecap="butt"/><rect x="716" y="587" width="6" height="7" fill="#fff"/></g><path d="M781 461Q796 468 808 480Q822 494 832 506L842 512Q832 492 818 478Q806 466 781 461Z M796 462Q804 462 812 468Q830 482 842 504L848 508Q842 486 826 472Q812 462 796 462Z M818 466Q840 466 850 480Q856 492 852 506L846 504Q848 490 838 480Q830 472 818 466Z M800 494Q814 498 824 510L834 520Q820 514 812 506Q806 500 800 494Z" fill="#fff" stroke="#fff" stroke-width="1.5"/><circle cx="868.6" cy="524.2" r="29" fill="#fff" fill-opacity="0.5" stroke="#fff" stroke-width="3"/><g fill="#d8d8d8" fill-opacity="0.8"><path d="M868.6 514L878 521L874.5 532H862.7L859.2 521Z"/><path d="M848 508Q856 498 866 497L864 506L852 512Z"/><path d="M872 497Q884 500 890 510L884 516L874 506Z"/><path d="M842 530Q842 540 850 548L856 540L852 530Z"/><path d="M895 530Q895 540 887 548L881 540L885 530Z"/><path d="M858 549Q868 553 878 549L874 542H862Z"/></g><g font-family="Liberation Sans" font-weight="bold" font-style="italic" font-size="16.5" fill="#fff"><text x="674" y="638.4">T</text><text x="699" y="638.4">H</text><text x="726" y="638.4">E</text><text x="768" y="638.4">B</text><text x="791.5" y="638.4">O</text><text x="818" y="638.4">O</text><text x="843" y="638.4">K</text><text x="870" y="638.4">M</text><text x="894.6" y="638.4">A</text><text x="919.5" y="638.4">K</text><text x="944" y="638.4">E</text><text x="967.5" y="638.4">R</text><text x="991" y="638.4">S</text></g></g></svg>
</body></html>
